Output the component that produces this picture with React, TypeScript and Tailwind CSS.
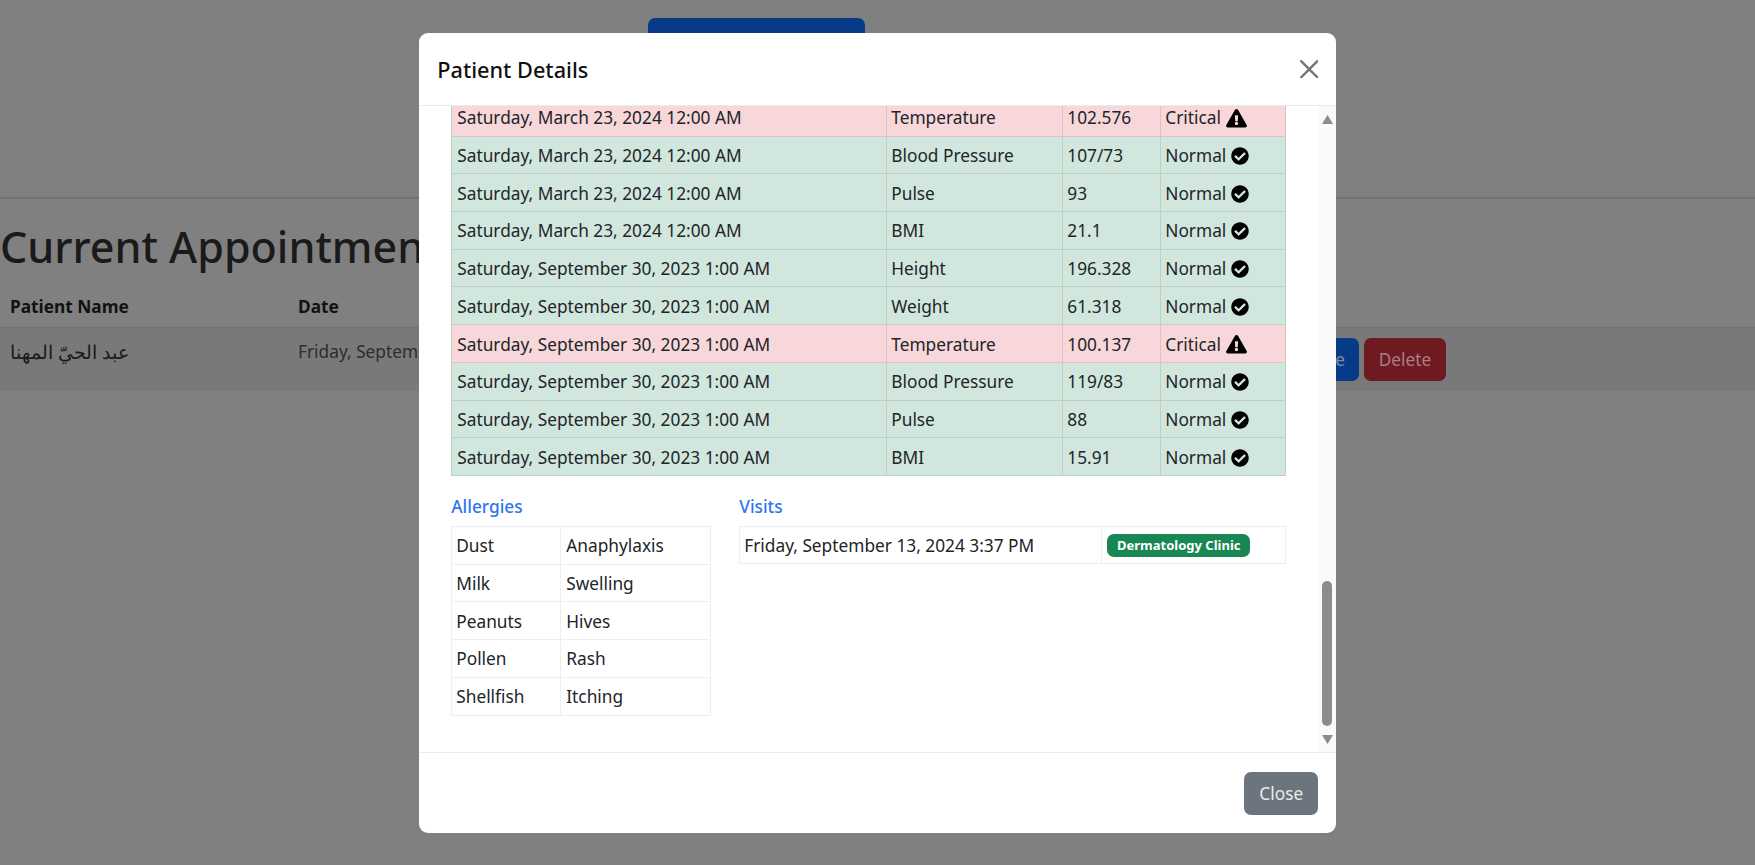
import { FaCheckCircle, FaExclamationTriangle } from "react-icons/fa";

type Vital = {
  date: string;
  name: string;
  value: string;
  critical?: boolean;
};

const MARCH = "Saturday, March 23, 2024 12:00 AM";
const SEPT = "Saturday, September 30, 2023 1:00 AM";

const vitals: Vital[] = [
  { date: MARCH, name: "Temperature", value: "102.576", critical: true },
  { date: MARCH, name: "Blood Pressure", value: "107/73" },
  { date: MARCH, name: "Pulse", value: "93" },
  { date: MARCH, name: "BMI", value: "21.1" },
  { date: SEPT, name: "Height", value: "196.328" },
  { date: SEPT, name: "Weight", value: "61.318" },
  { date: SEPT, name: "Temperature", value: "100.137", critical: true },
  { date: SEPT, name: "Blood Pressure", value: "119/83" },
  { date: SEPT, name: "Pulse", value: "88" },
  { date: SEPT, name: "BMI", value: "15.91" },
];

const allergies = [
  ["Dust", "Anaphylaxis"],
  ["Milk", "Swelling"],
  ["Peanuts", "Hives"],
  ["Pollen", "Rash"],
  ["Shellfish", "Itching"],
];

function VitalsTable() {
  return (
    <div className="-mt-[7px] w-[835px] border-l border-[#bcd0c7]">
      {vitals.map((row, idx) => {
        const tone = row.critical
          ? "bg-[#f8d7da] border-[#dfc2c4]"
          : "bg-[#d1e7dd] border-[#bcd0c7]";
        return (
          <div key={idx} className={`flex h-[37.7px] items-center border-b border-r ${tone}`}>
            <div className={`flex h-full w-[435px] items-center border-r pl-[5px] pt-[2px] ${tone}`}>{row.date}</div>
            <div className={`flex h-full w-[176px] items-center border-r pl-[4px] pt-[2px] ${tone}`}>{row.name}</div>
            <div className={`flex h-full w-[98px] items-center border-r pl-[4px] pt-[2px] ${tone}`}>{row.value}</div>
            <div className="flex h-full flex-1 items-center gap-[5px] pl-[4px] pt-[2px]">
              {row.critical ? (
                <>
                  Critical
                  <FaExclamationTriangle className="h-[18.5px] w-[21px] text-black" />
                </>
              ) : (
                <>
                  Normal
                  <FaCheckCircle className="size-[18px] text-black" />
                </>
              )}
            </div>
          </div>
        );
      })}
    </div>
  );
}

function AllergiesTable() {
  return (
    <div className="w-[260px] border-l border-t border-[#eceef0]">
      {allergies.map(([what, reaction]) => (
        <div key={what} className="flex h-[37.75px] items-center border-b border-r border-[#eceef0]">
          <div className="flex h-full w-[109px] items-center border-r border-[#eceef0] pl-[4px] pt-[2px]">{what}</div>
          <div className="pl-[5px] pt-[2px]">{reaction}</div>
        </div>
      ))}
    </div>
  );
}

function VisitsTable() {
  return (
    <div className="flex h-[38px] w-[547px] items-center border border-[#eceef0]">
      <div className="flex h-full w-[362px] items-center border-r border-[#eceef0] pl-[4px] pt-[2px]">
        Friday, September 13, 2024 3:37 PM
      </div>
      <span className="ml-[5px] mt-[2px] flex h-[23px] w-[143px] items-center justify-center rounded-[7px] bg-[#198754] text-[13px] font-bold text-white">
        Dermatology Clinic
      </span>
    </div>
  );
}

function FakeScrollbar() {
  return (
    <div className="flex w-[18px] flex-col items-center bg-[#fafafa] pt-[9px]">
      <svg viewBox="0 0 11 9" className="h-[9px] w-[11px] fill-[#8c8c8c]">
        <path d="M5.5 0 11 9H0z" />
      </svg>
      <div className="mt-[457px] h-[145px] w-[10px] rounded-[5px] bg-[#8c8c8c]" />
      <svg viewBox="0 0 11 9" className="mt-[9px] h-[9px] w-[11px] fill-[#8c8c8c]">
        <path d="M0 0h11L5.500 9z" />
      </svg>
    </div>
  );
}

function PatientModal() {
  return (
    <div className="absolute inset-0 flex justify-center pl-[0.5px]">
      <div className="mt-[33px] flex h-[800px] w-[917px] flex-col overflow-hidden rounded-[9px] bg-white text-[#212529]">
        <div className="flex h-[73px] items-center justify-between border-b border-[#e9ecef] pl-[18px] pr-[18px]">
          <h5 className="pt-[2px] text-[21.7px] font-medium text-[#111]">Patient Details</h5>
          <svg viewBox="0 0 16 16" className="size-[18.5px] fill-[#757575]">
            <path d="M.293.293a1 1 0 0 1 1.414 0L8 6.586 14.293.293a1 1 0 1 1 1.414 1.414L9.414 8l6.293 6.293a1 1 0 0 1-1.414 1.414L8 9.414l-6.293 6.293a1 1 0 0 1-1.414-1.414L6.586 8 .293 1.707a1 1 0 0 1 0-1.414z" />
          </svg>
        </div>
        <div className="flex min-h-0 flex-1">
          <div className="min-w-0 flex-1 overflow-hidden pl-[32px]">
            <VitalsTable />
            <div className="mt-[18px] flex gap-[28px]">
              <div>
                <div className="mb-[6px] font-medium text-[#2f74f0]">Allergies</div>
                <AllergiesTable />
              </div>
              <div>
                <div className="mb-[6px] font-medium text-[#2f74f0]">Visits</div>
                <VisitsTable />
              </div>
            </div>
          </div>
          <FakeScrollbar />
        </div>
        <div className="flex h-[81px] items-center justify-end border-t border-[#e9ecef] pr-[18px]">
          <button className="h-[43px] w-[74px] rounded-[7px] bg-[#6c757d] pt-[1px] text-[#e9ebed]">Close</button>
        </div>
      </div>
    </div>
  );
}

function PageBehind() {
  return (
    <div className="text-[#101214]">
      <div className="h-[199px] border-b-2 border-[#737373] pl-[648px] pt-[18px]">
        <div className="h-[44px] w-[217px] rounded-[7px] bg-[#073a87]" />
      </div>
      <h1 className="mt-[20px] h-[55px] text-[43px] leading-[55px] font-medium text-[#1a1a1a]">Current Appointments</h1>
      <div className="mt-[14px] flex h-[40px] items-center border-b border-[#737373] pb-[2px] pl-[10px] font-bold">
        <span className="w-[288px]">Patient Name</span>
        <span>Date</span>
      </div>
      <div className="flex h-[63px] items-center bg-[#797979] pl-[10px] text-[#2b2d2f]">
        <span className="w-[288px] pb-[16px] text-[19px] leading-[26px] text-[#1a1a1a]">
          <span dir="rtl">عبد الحيّ المهنا</span>
        </span>
        <span className="w-[500px] pb-[16px]">Friday, September 13, 2024 3:37 PM</span>
        <div className="ml-[471px] flex gap-[5px]">
          <span className="flex h-[43px] w-[90px] items-center justify-end rounded-[7px] bg-[#073a87] pr-[14px] text-[#7f8ba0]">Done</span>
          <span className="flex h-[43px] w-[82px] items-center justify-center rounded-[7px] bg-[#6e1a20] text-[#a87f84]">Delete</span>
        </div>
      </div>
    </div>
  );
}

export default function App() {
  return (
    <div className="relative h-[865px] overflow-hidden bg-[#808080] font-['Noto_Sans',sans-serif] text-[17.3px]">
      <PageBehind />
      <PatientModal />
    </div>
  );
}
